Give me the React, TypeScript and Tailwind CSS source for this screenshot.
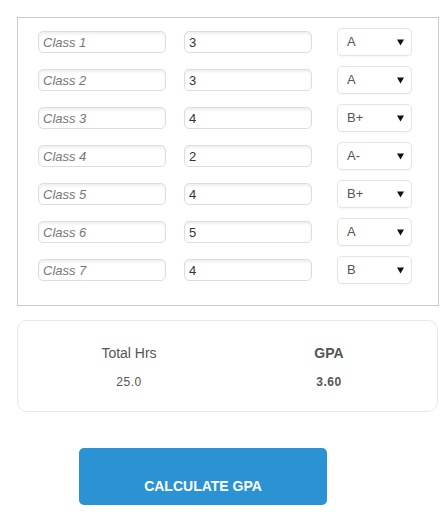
import React from 'react';

// rows of the course table
const ROWS = [
  { name: 'Class 1', hrs: '3', grade: 'A' },
  { name: 'Class 2', hrs: '3', grade: 'A' },
  { name: 'Class 3', hrs: '4', grade: 'B+' },
  { name: 'Class 4', hrs: '2', grade: 'A-' },
  { name: 'Class 5', hrs: '4', grade: 'B+' },
  { name: 'Class 6', hrs: '5', grade: 'A' },
  { name: 'Class 7', hrs: '4', grade: 'B' },
];

const inputCls =
  'w-[128px] h-[22px] px-[4px] bg-white border border-[#dedede] rounded-[5px] text-[13px] leading-[20px] shadow-[inset_0_2px_3px_rgba(0,0,0,0.07)] outline-none';

function GradeSelect({ value }: { value: string }) {
  return (
    <div className="w-[75px] h-[28px] flex items-center justify-between pl-[9px] pr-[7px] bg-white border border-[#e4e4e4] rounded-[5px] shadow-[0_1px_2px_rgba(0,0,0,0.04)] text-[13px] text-[#555]">
      <span>{value}</span>
      <svg width="7" height="7" viewBox="0 0 7 7" className="mt-[1px]">
        <path d="M0 0.5 H7 L3.5 6.5 Z" fill="#111" />
      </svg>
    </div>
  );
}

export default function App() {
  return (
    <div
      className="min-h-[522px] bg-white pt-[17px] pl-[17px]"
      style={{ fontFamily: '"Liberation Sans", Arial, sans-serif' }}
    >
      {/* course table */}
      <div className="w-[422px] border border-[#cccccc] pt-[10px] pb-[21px] pl-[20px] flex flex-col gap-[10px]">
        {ROWS.map(row => (
          <div key={row.name} className="flex items-center h-[28px]">
            <input
              className={`${inputCls} placeholder:italic placeholder:text-[#777]`}
              placeholder={row.name}
              readOnly
            />
            <input
              className={`${inputCls} ml-[18px] text-[#333]`}
              value={row.hrs}
              readOnly
            />
            <div className="ml-[25px]">
              <GradeSelect value={row.grade} />
            </div>
          </div>
        ))}
      </div>

      {/* results */}
      <div className="mt-[14px] w-[421px] h-[92px] border border-[#e8e8e8] rounded-[10px] grid grid-cols-[222px_178px] pt-[23px]">
        <div className="flex flex-col items-center text-[#555]">
          <span className="text-[14px] leading-[18px]">Total Hrs</span>
          <span className="mt-[12px] text-[12px] leading-[16px] tracking-[0.5px]">25.0</span>
        </div>
        <div className="flex flex-col items-center text-[#555] font-bold">
          <span className="text-[14px] leading-[18px]">GPA</span>
          <span className="mt-[12px] text-[12px] leading-[16px] tracking-[0.5px]">3.60</span>
        </div>
      </div>

      {/* action */}
      <button className="mt-[36px] ml-[62px] w-[248px] h-[57px] bg-[#2b93d3] rounded-[5px] text-white font-bold text-[14px] pt-[19px]">
        CALCULATE GPA
      </button>
    </div>
  );
}
